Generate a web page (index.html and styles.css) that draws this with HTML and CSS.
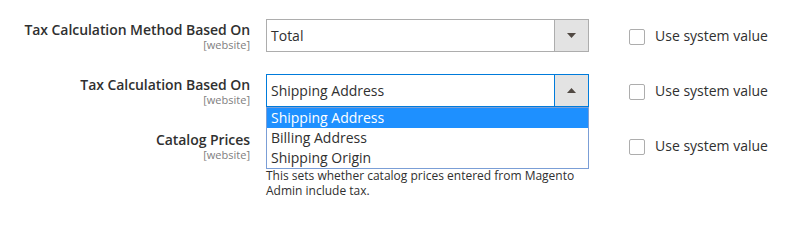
FILE: index.html
```html
<!DOCTYPE html>
<html lang="en">
<head>
<meta charset="utf-8">
<title>Tax Calculation Settings</title>
<link rel="stylesheet" href="styles.css">
</head>
<body>
<div class="form">
  <div class="row">
    <div class="label">
      <span class="title">Tax Calculation Method Based On</span>
      <span class="scope">[website]</span>
    </div>
    <div class="control">
      <div class="select">
        <span class="value">Total</span>
        <span class="btn"><svg width="9" height="5" viewBox="0 0 9 5"><path d="M0 0H9L4.5 5Z" fill="#514943"/></svg></span>
      </div>
    </div>
    <label class="use-default"><span class="cb"></span><span class="cb-label">Use system value</span></label>
  </div>

  <div class="row">
    <div class="label">
      <span class="title">Tax Calculation Based On</span>
      <span class="scope">[website]</span>
    </div>
    <div class="control open">
      <div class="select focused">
        <span class="value">Shipping Address</span>
        <span class="btn"><svg width="9" height="5" viewBox="0 0 9 5"><path d="M0 5H9L4.5 0Z" fill="#514943"/></svg></span>
      </div>
      <ul class="list">
        <li class="opt selected">Shipping Address</li>
        <li class="opt">Billing Address</li>
        <li class="opt">Shipping Origin</li>
      </ul>
    </div>
    <label class="use-default"><span class="cb"></span><span class="cb-label">Use system value</span></label>
  </div>

  <div class="row">
    <div class="label">
      <span class="title">Catalog Prices</span>
      <span class="scope">[website]</span>
    </div>
    <div class="control">
      <div class="select">
        <span class="value"></span>
        <span class="btn"><svg width="9" height="5" viewBox="0 0 9 5"><path d="M0 0H9L4.5 5Z" fill="#514943"/></svg></span>
      </div>
      <p class="note">This sets whether catalog prices entered from Magento Admin include tax.</p>
    </div>
    <label class="use-default"><span class="cb"></span><span class="cb-label">Use system value</span></label>
  </div>
</div>
</body>
</html>
```

FILE: styles.css
```css
* { box-sizing: border-box; }
html, body { margin: 0; padding: 0; background: #fff; }
body {
  font-family: "Open Sans", "Liberation Sans", sans-serif;
  color: #303030;
  font-size: 14px;
}
.form {
  padding-top: 19px;
  display: flex;
  flex-direction: column;
  gap: 22px;
}
.row {
  display: grid;
  grid-template-columns: 250px 323px 1fr;
  column-gap: 16px;
  align-items: start;
}
.label {
  display: flex;
  flex-direction: column;
  align-items: flex-end;
  text-align: right;
  padding-top: 3px;
}
.title {
  font-weight: 600;
  font-size: 14px;
  line-height: 16px;
  letter-spacing: -0.06px;
  color: #303030;
}
.scope {
  font-size: 11px;
  line-height: 13px;
  color: #808080;
}
.control { position: relative; }
.select {
  height: 33px;
  border: 1px solid #adadad;
  background: #fff;
  display: flex;
  align-items: center;
}
.select.focused { border-color: #007bdb; }
.value {
  flex: 1;
  padding-left: 4px;
  line-height: 19px;
  min-height: 19px;
  color: #303030;
}
.btn {
  width: 34px;
  align-self: stretch;
  background: #e3e3e3;
  border-left: 1px solid #adadad;
  display: flex;
  align-items: center;
  justify-content: center;
}
.focused .btn { border-left-color: #007bdb; }
.list {
  position: absolute;
  top: 33px;
  left: 0;
  width: 323px;
  margin: 0;
  padding: 0;
  list-style: none;
  background: #fff;
  border: 1px solid #7b9ed6;
  z-index: 5;
}
.opt {
  height: 20px;
  line-height: 20px;
  padding-left: 4px;
  font-size: 14px;
  color: #303030;
}
.opt.selected { background: #1e90ff; color: #fff; }
.note {
  margin: 6px 0 0;
  font-size: 12px;
  line-height: 15px;
  color: #303030;
}
.use-default {
  height: 33px;
  display: flex;
  align-items: center;
  padding-left: 24px;
  gap: 10px;
}
.cb {
  width: 16px;
  height: 16px;
  border: 1px solid #adadad;
  border-radius: 2px;
  background: #fff;
  margin-top: 2px;
  flex: none;
}
.cb-label {
  font-size: 14px;
  line-height: 19px;
  color: #303030;
}
```
